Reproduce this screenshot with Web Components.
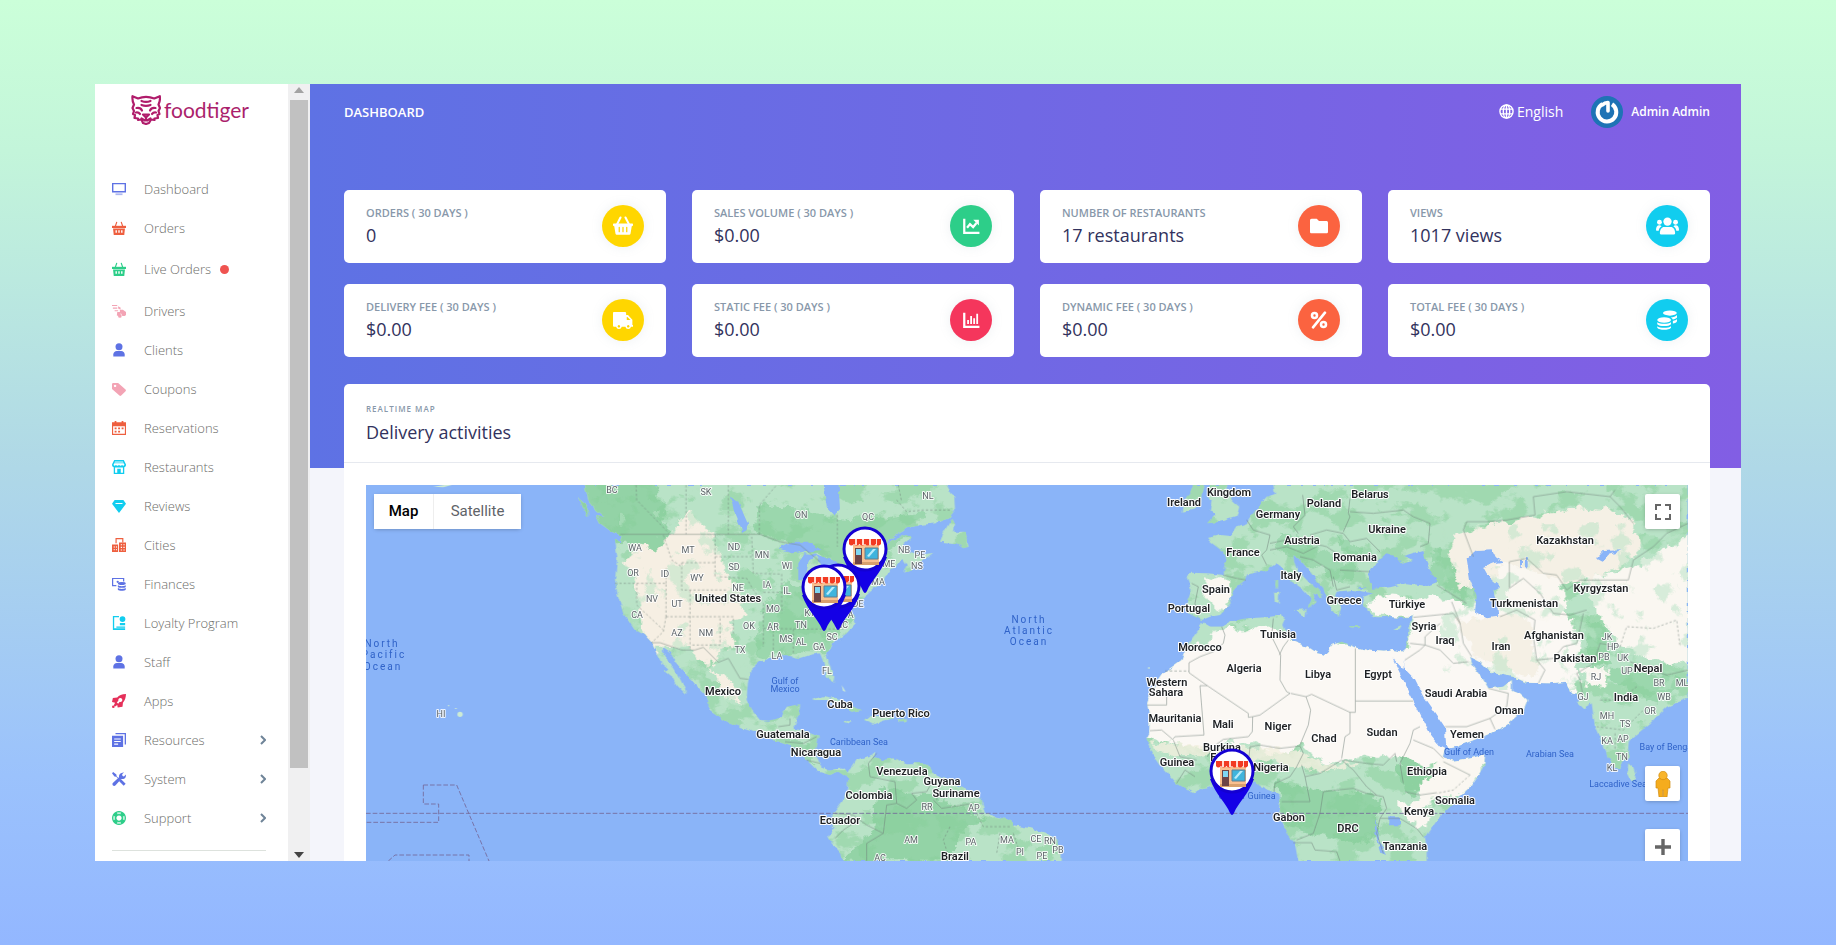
<!DOCTYPE html>
<html lang="en">
<head>
<meta charset="utf-8">
<meta name="viewport" content="width=device-width, initial-scale=1">
<title>FoodTiger – Dashboard</title>
<style>
  html, body { margin: 0; height: 100%; }
  body {
    font-family: "Open Sans", "Noto Sans", sans-serif;
    background: linear-gradient(180deg, #cbffd9 0%, #c3f5da 16%, #b0d9e6 48%, #9bc2fc 82%, #93b7ff 100%);
  }
</style>
</head>
<body>
<ft-window>
  <ft-sidebar slot="side">
    <ft-nav-item icon="tv" tone="#5e72e4">Dashboard</ft-nav-item>
    <ft-nav-item icon="basket" tone="#ee5f3f">Orders</ft-nav-item>
    <ft-nav-item icon="basket" tone="#2dce89" live>Live Orders</ft-nav-item>
    <ft-nav-item icon="delivery" tone="#f3a4b5">Drivers</ft-nav-item>
    <ft-nav-item icon="user" tone="#5e72e4">Clients</ft-nav-item>
    <ft-nav-item icon="tag" tone="#f3a4b5">Coupons</ft-nav-item>
    <ft-nav-item icon="calendar" tone="#ee5f3f">Reservations</ft-nav-item>
    <ft-nav-item icon="shop" tone="#11cdef">Restaurants</ft-nav-item>
    <ft-nav-item icon="diamond" tone="#11cdef">Reviews</ft-nav-item>
    <ft-nav-item icon="city" tone="#ee5f3f">Cities</ft-nav-item>
    <ft-nav-item icon="money" tone="#5e72e4">Finances</ft-nav-item>
    <ft-nav-item icon="badge" tone="#11cdef">Loyalty Program</ft-nav-item>
    <ft-nav-item icon="user" tone="#5e72e4">Staff</ft-nav-item>
    <ft-nav-item icon="rocket" tone="#e5305a">Apps</ft-nav-item>
    <ft-nav-item icon="copy" tone="#5e72e4" more>Resources</ft-nav-item>
    <ft-nav-item icon="tools" tone="#5e72e4" more>System</ft-nav-item>
    <ft-nav-item icon="support" tone="#2dce89" more>Support</ft-nav-item>
  </ft-sidebar>
  <ft-topbar slot="main" heading="Dashboard"></ft-topbar>
  <ft-stats slot="main">
    <ft-stat icon="basketBig" tone="#ffd600" value="0">Orders ( 30 days )</ft-stat>
    <ft-stat icon="chartLine" tone="#2dce89" value="$0.00">Sales Volume ( 30 days )</ft-stat>
    <ft-stat icon="folder" tone="#fb6340" value="17 restaurants">Number of restaurants</ft-stat>
    <ft-stat icon="users" tone="#11cdef" value="1017 views">Views</ft-stat>
    <ft-stat icon="truck" tone="#ffd600" value="$0.00">Delivery fee ( 30 days )</ft-stat>
    <ft-stat icon="chartBar" tone="#f5365c" value="$0.00">Static fee ( 30 days )</ft-stat>
    <ft-stat icon="percent" tone="#fb6340" value="$0.00">Dynamic fee ( 30 days )</ft-stat>
    <ft-stat icon="coins" tone="#11cdef" value="$0.00">Total fee ( 30 days )</ft-stat>
  </ft-stats>
  <ft-panel slot="main" overline="Realtime map" heading="Delivery activities">
    <ft-map></ft-map>
  </ft-panel>
</ft-window>

<script>
const define = (name, html, after) => {
  const tpl = document.createElement('template');
  tpl.innerHTML = html;
  customElements.define(name, class extends HTMLElement {
    constructor() {
      super();
      this.attachShadow({ mode: 'open' }).append(tpl.content.cloneNode(true));
    }
    connectedCallback() { if (after) after(this, this.shadowRoot); }
  });
};

/* 16 × 16 glyphs, painted in currentColor */
const ICONS = {
  tv: '<path d="M0 1h16v11H0zM1.6 2.6v7.8h12.8V2.6z" fill-rule="evenodd"/><path d="M4 13h8v2H4z" opacity=".5"/>',
  basket: '<path d="M0 5.5h16V8H0z"/><path d="M5.5 1 3.8 6M10.5 1l1.700 5" stroke="currentColor" stroke-width="1.300"/><path fill-rule="evenodd" d="M1.2 8.6h13.6l-.8 7.4H2zM4 10.5v3h1.6v-3zm3.2 0v3h1.6v-3zm3.2 0v3H12v-3z"/>',
  delivery: '<path d="M0 1h6v1.4H0zM1 4h5v1.4H1zM3 7h4v1.4H3zM7 2.5l3 1.8-.5 2L7 5zM6 9h3V6.5l3.5.2L16 9v3.5l-2.2 1.2H12l-1.8-3-2.2 3L5.5 13z"/><circle cx="9" cy="13.6" r="2.1"/><circle cx="13.6" cy="11.5" r="2.1"/>',
  user: '<circle cx="8" cy="4.2" r="4"/><path d="M1.5 15.5V13c0-2.4 2-4 4-4h5c2 0 4 1.600 4 4v2.500z"/>',
  tag: '<path fill-rule="evenodd" d="M0 2.500A1.500 1.500 0 0 1 1.500 1H7l8.500 7.500c.6.600.6 1.400 0 2l-5 5c-.6.600-1.400.600-2 0L0 8zM3.500 3a1.400 1.400 0 1 0 .01 0z"/>',
  calendar: '<path fill-rule="evenodd" d="M0 1.500h16V16H0zM1.300 6v8.600h13.400V6z"/><path d="M3 0h2v3H3zM11 0h2v3h-2zM3 7.500h2.200v2H3zM7 7.500h2.200v2H7zM11 7.500h2.200v2H11zM3 11h2.200v2H3zM7 11h2.200v2H7z"/>',
  shop: '<path fill-rule="evenodd" d="M2.500 0h11L16 5c0 2-1 3-2 3.200V16H2V8.200C1 8 0 7 0 5zM3.500 1.600 1.800 5.500c.4 1.300 2 1.300 2.700 0 .6 1.300 2.800 1.300 3.500 0 .7 1.300 2.900 1.300 3.500 0 .7 1.300 2.300 1.300 2.700 0l-1.700-3.900zM3.500 8.500v6H6V10h4v4.500h2.500v-6z"/><path d="M2.500 2h11l.8 2H1.700z" opacity=".5"/>',
  diamond: '<path fill-rule="evenodd" d="M3 1h10l3 4.500L8 16 0 5.500zM4.500 4.500l-1 1.300h9l-1-1.300z"/>',
  city: '<path d="M4 0h9v5h-1.300V1.300H5.300V6H4z"/><path fill-rule="evenodd" d="M0 7.500h7V16H0zM2 9.500V11h1V9.500zm2.500 0V11h1V9.500zM2 12.500V14h1v-1.500zm2.500 0V14h1v-1.500zM8 5h8v11H8zm2 2v1.400h1.500V7zm3 0v1.400h1.500V7zm-3 3v1.400h1.500V10zm3 0v1.400h1.500V10zm-3 3v1.400h1.500V13zm3 0v1.400h1.500V13z"/>',
  money: '<path d="M0 1h14v4h-1.400V2.400H1.400v6.800H5v1.400H0z"/><circle cx="6.500" cy="5.500" r="1.300"/><ellipse cx="11.200" cy="7.500" rx="4.500" ry="1.700"/><path d="M6.700 9.500c1.500 1.300 7.500 1.300 9 0v1.800c-1.500 1.500-7.500 1.500-9 0zM6.700 12.700c1.500 1.300 7.500 1.300 9 0v1.800c-1.500 1.500-7.500 1.500-9 0z"/>',
  badge: '<path d="M1 0h7v1.500H2.500V14H15v2H1z"/><circle cx="12" cy="3.500" r="3.300"/><path d="M9 8h6v2.500H9zM5 12h10v1.500H5z"/>',
  rocket: '<path fill-rule="evenodd" d="M16 0c-5 .3-8 1.500-10 4L1 4.500 0 9l3.500 1L2 13l1.500 1.200L6 12.500l.5 3 5.500-1 .5-4.500c2.500-3 3.300-6 3.500-10zM9.500 4.500a2.300 2.300 0 1 0 .01 0z"/><path d="M5.500 9.500 10 5.500v2L7 11z" fill="#fff"/><circle cx="1.500" cy="14.500" r="1.500"/>',
  copy: '<path d="M4 0h12v13h-1.500V1.500H4z"/><path fill-rule="evenodd" d="M0 3h12.700v13H0zM2.500 6.300v1.200H10V6.300zm0 2.900v1.200H10V9.200zm0 2.900v1.200h4.500v-1.200z"/>',
  tools: '<path d="M1.300 0 5 2.800l.3 2L9 8.500l1.400-.3 5.200 5.200-2.200 2.300-5.200-5.200.3-1.400-3.700-3.700-2-.3L0 1.300z"/><path d="m11 1.200 2.800-.8L11.600 2.700l.4 1.800 1.700.5 2.100-2.200c.6 2.400-.6 4.900-3 5.200L10.500 8l-6.400 7.200c-1 1-2.300.8-3 .1-.8-.9-.8-2.200.1-3L8 6c-.3-2.300.9-4.300 3-4.800z"/>',
  support: '<path fill-rule="evenodd" d="M8 0a8 8 0 1 1-.01 0zM8 5a3 3 0 1 0 .01 0z"/><path d="M5.500 1.800a7 7 0 0 1 5 0l-.8 1.800a5 5 0 0 0-3.400 0zM5.500 14.200a7 7 0 0 0 5 0l-.8-1.800a5 5 0 0 1-3.400 0zM1.800 5.500a7 7 0 0 0 0 5l1.800-.8a5 5 0 0 1 0-3.400zM14.200 5.500a7 7 0 0 1 0 5l-1.800-.8a5 5 0 0 0 0-3.400z" fill="#fff" opacity=".7"/>',
  basketBig: '<path d="M.5 6h15c.7 0 .7 2 0 2l-.5.200-1 6c-.1.500-.5.800-1 .800H3c-.5 0-.9-.3-1-.8l-1-6L.5 8c-.7 0-.7-2 0-2z"/><path d="M6 1.200 3.300 6.500M10 1.200l2.700 5.300" stroke="currentColor" stroke-width="1.700" stroke-linecap="round"/><path d="M5 9v3.500M8 9v3.500M11 9v3.500" stroke="var(--tone)" stroke-width="1" stroke-linecap="round"/>',
  chartLine: '<path d="M1 1.500h2v11.500h12.500v2H1z"/><path d="m4.500 9.500 2.600-3.200 2.800 2.600 3-3.600" fill="none" stroke="currentColor" stroke-width="2"/><path d="M10 2.500h5v5z"/>',
  folder: '<path d="M0 3c0-.8.500-1.500 1.500-1.500H6L8 3.500h6.500c.9 0 1.500.600 1.500 1.500v8c0 .9-.6 1.500-1.500 1.500h-13C.5 14.500 0 13.900 0 13z"/>',
  users: '<circle cx="8" cy="4.600" r="2.900"/><circle cx="2.400" cy="5" r="1.700"/><circle cx="13.600" cy="5" r="1.700"/><path d="M3.500 13.500c-.8 0-.8-.4-.8-1 0-2.400 1.300-4.200 3-4.200h4.600c1.700 0 3 1.800 3 4.200 0 .6 0 1-.8 1zM0 10.500c0-2 .8-3.300 2.200-3.300.8 0 1.300.2 1.700.6-1.300.8-1.900 1.900-2 3.100H.5c-.4 0-.5-.1-.5-.4zM16 10.500c0-2-.8-3.300-2.200-3.300-.8 0-1.300.2-1.700.6 1.300.8 1.900 1.900 2 3.100h1.400c.4 0 .5-.1.500-.4z"/>',
  truck: '<path fill-rule="evenodd" d="M1 1.500h8.500c.5 0 1 .4 1 1V4H12l3.500 3.700V12h.5v1.300h-1.600a2.300 2.300 0 0 1-4.500 0H7a2.300 2.300 0 0 1-4.500 0H1c-.6 0-1-.4-1-1v-10c0-.5.4-.8 1-.8zm10 4V8h3l-2.500-2.500zM4.700 12a1 1 0 1 0 .01 0zm7.500 0a1 1 0 1 0 .01 0z"/>',
  chartBar: '<path d="M1 1.500h2v11.500h12.500v2H1zM4.600 8h1.600v3.500H4.600zM7.300 4.500h1.600v7H7.300zM10 6.500h1.600v5H10zM12.700 2.500h1.600v9h-1.600z"/>',
  percent: '<g fill="none" stroke="currentColor" stroke-width="2.300"><circle cx="4" cy="4" r="2.200"/><circle cx="12" cy="12" r="2.200"/><path d="M13.300 1.500 2.700 14.500" stroke-linecap="round"/></g>',
  coins: '<ellipse cx="10.300" cy="2.400" rx="5.500" ry="2.100"/><path d="M16 4c-1 1.200-3 1.800-5 1.900 1 .4 1.500 1 1.600 1.700 1.500-.3 2.800-.8 3.400-1.600zM16 7.200c-.6.8-1.900 1.300-3.300 1.500v2c1.500-.3 3.300-.9 3.300-2z"/><ellipse cx="5.700" cy="8" rx="5.500" ry="2.200"/><path d="M.2 9.800c2.200 1.700 8.800 1.700 11 0v1.500c-1.600 2-9.400 2-11 0zM.2 12.900c2.200 1.700 8.800 1.700 11 0v1.200c-1.600 2.200-9.400 2.200-11 0z"/>',
  globe: '<g fill="none" stroke="currentColor" stroke-width="1.500"><circle cx="8" cy="8" r="7"/><ellipse cx="8" cy="8" rx="3.400" ry="7"/><path d="M8 1v14M1.500 5.500h13M1.500 10.500h13"/></g>'
};
const glyph = name => `<svg viewBox="0 0 16 16" fill="currentColor" aria-hidden="true">${ICONS[name]}</svg>`;

define('ft-window', `
  <style>
    :host { display: flex; box-sizing: border-box; height: 100vh; padding: 84px 95px; }
    aside { display: flex; flex: 0 0 215px; background: #fff; overflow: hidden; }
    ::slotted([slot=side]) { flex: 1; }
    main {
      flex: 1; min-width: 0; display: flex; flex-direction: column; overflow: hidden;
      padding: 0 31px 0 34px;
      background: linear-gradient(90deg, #5e72e4, #825ee4) top / 100% 384px no-repeat, #f4f5fb;
    }
  </style>
  <aside><slot name="side"></slot><ft-scrollbar></ft-scrollbar></aside>
  <main><slot name="main"></slot></main>`);

define('ft-scrollbar', `
  <style>
    :host { display: flex; flex-direction: column; flex: 0 0 22px; background: #f0f0f1; }
    div { width: 18px; height: 100%; margin: 0 auto 0 2px; display: flex; flex-direction: column; align-items: center; }
    i { flex: 1; width: 18px; margin-bottom: 84px; background: #c1c1c1; }
    svg { width: 10px; height: 6px; margin: 3px 0 7px; }
    svg + i + svg { margin: 0 0 3px; }
  </style>
  <div>
    <svg viewBox="0 0 10 6"><path d="M0 6 5 0l5 6z" fill="#a3a3a3"/></svg>
    <i></i>
    <svg viewBox="0 0 10 6"><path d="M0 0h10L5 6z" fill="#444"/></svg>
  </div>`);

define('ft-sidebar', `
  <style>
    :host { display: block; }
    .brand { display: flex; align-items: center; gap: 3px; height: 30px; margin: 11px 0 44px 36px; color: #ab1f6c; text-decoration: none; font: 400 21px/30px Lato, sans-serif; }
    .brand svg { width: 30px; height: 30px; }
    nav { display: flex; flex-direction: column; }
    hr { border: 0; border-top: 1px solid #dde2dd; margin: 13px 22px 0 17px; }
  </style>
  <a class="brand" href="#home" aria-label="foodtiger">
    <svg viewBox="0 0 30 30" fill="none" stroke="#b01c6b" stroke-width="2.200" stroke-linejoin="round" stroke-linecap="round">
      <path d="M7 3.500 1.500 1.200C1.200 4 1.600 7 3 9.500L1.500 13l1.500 3-1 3 2 1-.5 3 3.500.5V25l3.500-.5L12 28l3 1 3-1 2-3.500 3.500.5v-1.500l3.500-.5-.5-3 2-1-1-3 1.500-3L27.500 9.500c1.300-2.500 1.700-5.500 1.300-8.300L23.300 3.500C18 1.500 12 1.500 7 3.500z"/>
      <path d="M10.500 6c3 1.300 6 1.300 9 0M10.500 10c3 1.200 6 1.200 9 0M5.500 13c2.500-.5 4.500.3 5.500 2.500M24.500 13c-2.500-.5-4.500.3-5.500 2.500M5 17.500c1.500-.3 3 .2 4 1.500M25 17.500c-1.500-.3-3 .2-4 1.500M12 19.500h6l-3 3zM15 22.500v2M10.500 23.500l3.500 2M19.500 23.500l-3.500 2"/>
    </svg>
    <span>foodtiger</span>
  </a>
  <nav aria-label="Main"><slot></slot></nav>
  <hr>`);

define('ft-nav-item', `
  <style>
    :host { display: block; }
    a { display: flex; align-items: center; height: 39px; padding: 0 22px 0 17px; color: #6c6c69; font-size: 13px; font-weight: 300; text-decoration: none; }
    :host([live]) a { height: 44px; }
    .icon { display: flex; flex: 0 0 32px; color: var(--tone); }
    .icon svg { width: 14px; height: 14px; overflow: visible; }
    .dot { display: none; width: 9px; height: 9px; margin-left: 9px; border-radius: 50%; background: #ef5350; }
    :host([live]) .dot { display: block; }
    .chev { display: none; width: 6px; height: 10px; margin-left: auto; fill: none; stroke: #6f8498; stroke-width: 2; }
    :host([more]) .chev { display: block; }
  </style>
  <a href="#"><span class="icon"></span><span><slot></slot></span><span class="dot"></span>
    <svg class="chev" viewBox="0 0 6 10"><path d="m1 1 4 4-4 4"/></svg></a>`,
  (el, root) => {
    el.style.setProperty('--tone', el.getAttribute('tone'));
    root.querySelector('.icon').innerHTML = glyph(el.getAttribute('icon'));
  });

define('ft-topbar', `
  <style>
    :host { display: flex; align-items: center; flex: none; height: 55px; margin-bottom: 51px; color: #fff; }
    h1 { margin: 0 auto 0 0; font-size: 13px; line-height: 20px; font-weight: 600; text-transform: uppercase; }
    button { display: flex; align-items: center; border: 0; padding: 0; background: none; color: inherit; font: 400 14px/20px "Open Sans", sans-serif; }
    .lang { gap: 3px; margin-right: 28px; }
    .lang svg { width: 15px; height: 15px; }
    .me { gap: 8px; font-size: 12px; font-weight: 600; }
    .me svg { width: 32px; height: 32px; }
  </style>
  <h1></h1>
  <button class="lang" type="button">${glyph('globe')}<span>English</span></button>
  <button class="me" type="button">
    <svg viewBox="0 0 32 32"><circle cx="16" cy="16" r="16" fill="#1e73b5"/><path d="M11.500 8a9.300 9.300 0 1 0 9.500 .3" fill="none" stroke="#fff" stroke-width="4"/><path d="M12 8.500Q13.500 6.700 17 6.500v8.500" fill="none" stroke="#fff" stroke-width="3.600" stroke-linejoin="round" stroke-linecap="round"/></svg>
    <span>Admin Admin</span>
  </button>`,
  (el, root) => { root.querySelector('h1').textContent = el.getAttribute('heading'); });

define('ft-stats', `
  <style>:host { display: grid; flex: none; grid-template-columns: repeat(4, 1fr); gap: 21px 26px; margin-bottom: 27px; }</style>
  <slot></slot>`);

define('ft-stat', `
  <style>
    :host { display: flex; align-items: flex-start; justify-content: space-between; box-sizing: border-box; height: 73px; padding: 15px 22px; border-radius: 5px; background: #fff; }
    h2, p { margin: 0; white-space: nowrap; }
    h2 { color: #8898aa; font-size: 11px; line-height: 16px; font-weight: 600; text-transform: uppercase; }
    p { margin-top: 2px; color: #32325d; font-size: 18px; line-height: 24px; font-weight: 500; }
    .icon { display: grid; place-items: center; flex: none; width: 42px; height: 42px; border-radius: 50%; background: var(--tone); color: #fff; box-shadow: 0 0 12px rgba(136, 152, 170, .15); }
    .icon svg { width: 20px; height: 20px; }
    :host([icon=chartLine]) svg, :host([icon=chartBar]) svg, :host([icon=folder]) svg, :host([icon=percent]) svg { width: 18px; height: 18px; }
    :host([icon=users]) svg { width: 23px; height: 23px; }
  </style>
  <div><h2><slot></slot></h2><p></p></div><span class="icon"></span>`,
  (el, root) => {
    el.style.setProperty('--tone', el.getAttribute('tone'));
    root.querySelector('p').textContent = el.getAttribute('value');
    root.querySelector('.icon').innerHTML = glyph(el.getAttribute('icon'));
  });

define('ft-panel', `
  <style>
    :host { display: flex; flex: 1; min-height: 0; flex-direction: column; border-radius: 5px 5px 0 0; background: #fff; }
    header { padding: 18px 22px 17px; border-bottom: 1px solid #e6e9ef; }
    h6 { margin: 0 0 3px; color: #8898aa; font-size: 8px; line-height: 14px; font-weight: 600; letter-spacing: 1px; text-transform: uppercase; }
    h3 { margin: 0; color: #32325d; font-size: 18px; line-height: 26px; font-weight: 500; }
    ::slotted(*) { flex: 1; min-height: 0; margin: 22px 22px 0; }
  </style>
  <header><h6></h6><h3></h3></header><slot></slot>`,
  (el, root) => {
    root.querySelector('h6').textContent = el.getAttribute('overline');
    root.querySelector('h3').textContent = el.getAttribute('heading');
  });

/* Map labels: text, centre x, centre y */
const COUNTRIES = [['United States',728,598],['Mexico',723,691],['Guatemala',783,734],['Nicaragua',816,752],['Cuba',840,704],['Puerto Rico',901,713],['Venezuela',902,771],['Guyana',942,781],['Suriname',956,793],['Colombia',869,795],['Ecuador',840,820],['Brazil',955,856],
['Ireland',1184,502],['Kingdom',1229,492],['Belarus',1370,494],['Poland',1324,503],['Germany',1278,514],['Ukraine',1387,529],['Austria',1302,540],['France',1243,552],['Romania',1355,557],['Italy',1291,575],['Spain',1216,589],['Greece',1344,600],['Türkiye',1407,604],['Portugal',1189,608],['Syria',1424,626],['Tunisia',1278,634],['Morocco',1200,647],['Iraq',1445,640],['Algeria',1244,668],['Libya',1318,674],['Egypt',1378,674],['Western',1167,682],['Sahara',1166,692],['Saudi Arabia',1456,693],['Mauritania',1175,718],['Mali',1223,724],['Niger',1278,726],['Chad',1324,738],['Sudan',1382,732],['Burkina',1222,747],['Faso',1222,757],['Guinea',1177,762],['Nigeria',1271,767],['Ethiopia',1427,771],['Gabon',1289,817],['DRC',1348,828],['Kenya',1419,811],['Tanzania',1405,846],['Somalia',1455,800],['Yemen',1467,734],['Oman',1509,710],['Iran',1501,646],['Turkmenistan',1524,603],['Kazakhstan',1565,540],['Kyrgyzstan',1601,588],['Afghanistan',1554,635],['Pakistan',1575,658],['Nepal',1648,668],['India',1626,697]];
const STATES = [['BC',612,489],['SK',706,491],['ON',801,514],['QC',868,516],['WA',635,547],['MT',688,549],['ND',734,546],['MN',762,554],['WI',787,565],['OR',633,572],['ID',665,573],['WY',697,577],['SD',734,566],['NE',738,587],['IA',767,584],['IL',787,590],['NV',652,598],['UT',677,603],['MO',773,608],['CA',637,614],['AZ',677,632],['NM',706,632],['OK',749,625],['AR',773,626],['TN',801,624],['MS',786,638],['AL',801,641],['GA',819,646],['SC',832,636],['TX',740,649],['LA',777,655],['FL',827,670],['NB',904,549],['PE',920,554],['NS',917,565],['ME',889,563],['MA',878,581],['DE',858,603],['NL',928,495],['KY',810,612],['VA',848,614],['NC',842,624],['HI',441,713],['RR',927,806],['AP',974,807],['AM',911,839],['PA',971,841],['MA',1007,839],['CE',1036,838],['RN',1050,840],['PI',1020,851],['PB',1058,849],['PE',1042,855],['AC',880,857],
['JK',1607,636],['HP',1613,646],['PB',1604,656],['UK',1623,657],['UP',1627,670],['BR',1659,682],['ML',1682,682],['RJ',1596,676],['GJ',1583,696],['WB',1664,696],['OR',1650,710],['MH',1607,715],['TS',1625,723],['KA',1607,740],['AP',1623,738],['TN',1622,756],['KL',1612,767]];
const SEAS = [['Gulf of',785,680],['Mexico',785,688],['Caribbean Sea',859,741],['Gulf of Guinea',1247,795],['Gulf of Aden',1469,751],['Arabian Sea',1550,753],['Bay of Bengal',1667,746],['Laccadive Sea',1618,783]];
const OCEANS = [['North',382,643],['Pacific',384,654],['Ocean',383,666],['North',1029,619],['Atlantic',1029,630],['Ocean',1029,641]];
const PINS = [[865,549],[838,586],[824,587],[1232,771]];

const labels = (list, cls) => list.map(([t, x, y]) => `<text class="${cls}" x="${x}" y="${y + 4}">${t}</text>`).join('');
const pins = PINS.map(([x, y]) => `<g transform="translate(${x} ${y})">
  <path d="M-22 8C-16 24-6 32-2 42q2 4 4 0C6 32 16 24 22 8z" fill="#1400e6"/>
  <circle r="21" fill="#fff" stroke="#1400d2" stroke-width="3"/>
  <path d="M-12-4h26v20h-26z" fill="#f9bf8f"/><path d="M-12 13h26v3h-26z" fill="#d9a06c"/>
  <path d="M-10-1h7v16h-7z" fill="#6d4346"/><path d="M-9 0h5v6h-5z" fill="#7fd6f2"/>
  <path d="M0-1h13v11H0z" fill="#3fb4dd" stroke="#5f7f93"/><path d="m2 7 6-7h3l-7 8z" fill="#b8ecfb"/>
  <path d="M-16-10h32v5q-3 3-5 0-3 3-5.500 0-3 3-5.500 0-3 3-5.500 0-3 3-5.500 0-3 3-5 0z" fill="#f23a22"/>
  <path d="M-10-10h2v6h-2zM-3-10h2v6h-2zM4-10h2v6H4zM11-10h1v6h-1z" fill="#ffd9cf"/></g>`).join('');

/* Continents, on a grid three times finer than the labels' one */
const AMERICA = `M675 15 L685 60 710 90 735 110 708 105 720 130 755 155 785 168 780 188 765 178 772 230 765 300 772 340 790 400 825 450 855 465 875 487 890 520 905 550 925 565 915 575 940 595 950 615 980 645 975 625 950 580 925 540 905 510 910 502 930 515 950 550 980 585 1010 620 1040 650 1050 675 1045 690 1090 720 1140 740 1190 755 1240 780 1310 805 1340 840 1375 875 1410 885 1435 875 1465 895 1462 925 1455 955 1420 1000 1410 1030 1425 1045 1405 1065 1415 1090 1440 1120 1455 1143 H2105 L2105 1110 2090 1080 2060 1060 2010 1045 1960 1035 1950 1020 1910 1010 1875 1000 1865 960 1840 940 1800 920 1760 900 1720 880 1700 850 1640 850 1600 835 1570 840 1540 830 1550 815 1520 830 1490 840 1465 878 1445 862 1410 872 1385 862 1370 830 1368 810 1372 790 1376 770 1340 755 1300 742 1310 720 1318 700 1320 673 1280 680 1265 710 1230 722 1200 720 1175 690 1160 660 1163 610 1172 570 1200 545 1230 535 1280 525 1320 535 1350 525 1380 520 1390 545 1400 590 1420 612 1423 590 1407 550 1398 520 1420 490 1460 460 1487 430 1480 410 1465 390 1490 365 1510 350 1540 325 1570 310 1575 290 1590 275 1610 250 1630 240 1640 255 1630 278 1650 270 1690 240 1720 218 1680 225 1650 215 1630 195 1655 175 1635 165 1600 180 1570 200 1590 180 1640 145 1680 135 1730 130 1765 115 1785 90 1783 55 1760 15z
 M1740 185 L1750 160 1775 115 1785 130 1782 155 1815 155 1826 200 1810 205 1790 190z M1355 660 L1390 648 1430 655 1480 680 1505 690 1475 695 1450 680 1410 660z M1512 720 L1530 705 1580 706 1600 715 1570 722 1545 732z M1615 718h25v6h-25z M1450 722l24 2-4 6-18-3z M655 55l25 20 5 35-20-30z`;
const OLDWORLD = `M2525 425 L2550 440 2585 440 2610 425 2660 415 2720 412 2765 405 2775 420 2770 435 2780 460 2800 485 2840 500 2870 520 2900 525 2915 495 2945 485 2980 500 3030 512 3070 515 3100 510 3130 515 3140 495 3145 470 3150 430 3160 405 3130 415 3090 410 3050 412 3020 395 3012 370 3010 350 3040 340 2980 330 2930 335 2920 360 2945 380 2935 410 2920 395 2902 368 2890 320 2870 300 2850 275 2822 240 2800 225 2802 245 2812 270 2840 300 2880 335 2885 352 2860 340 2866 370 2846 385 2855 358 2825 325 2790 300 2770 265 2750 250 2720 270 2700 275 2662 283 2655 300 2630 320 2610 350 2615 370 2580 405 2550 410 2525 420 2485 400 2480 370 2495 330 2480 292 2495 278 2540 280 2590 285 2600 240 2590 215 2550 185 2545 173 2580 165 2610 168 2628 140 2660 130 2680 100 2700 72 2720 50 2745 42 2740 15 H3984 V655 L3920 680 3870 730 3810 780 3805 830 3785 850 3780 870 3760 860 3730 800 3705 740 3695 670 3670 685 3650 665 3670 650 3635 640 3615 605 3570 610 3500 608 3460 590 3430 585 3390 575 3360 545 3330 530 3340 560 3370 600 3385 625 3430 620 3455 600 3455 630 3480 640 3502 660 3490 690 3440 735 3380 765 3290 800 3252 808 3245 830 3280 842 3330 835 3375 822 3372 860 3330 920 3280 970 3230 1020 3195 1070 3200 1110 V1143 H2815 L2805 1090 2780 1060 2755 1000 2760 970 2755 940 2720 930 2680 905 2630 915 2550 920 2500 940 2450 910 2405 860 2370 810 2360 775 2368 760 2370 720 2362 670 2375 630 2410 580 2465 540 2485 490 2515 450z
 M2465 95 L2470 60 2495 30 2500 15 H2532 L2525 40 2520 80z M2545 130 L2570 100 2550 90 2555 60 2542 40 2550 15 H2600 L2615 60 2638 80 2630 110 2580 125z M2805 390l35-2-4 24z M2742 335l16 0 -2 33-12-3z M2748 300l6 0 0 24-8-6z M2968 438l32 1-2 5-28-2z M3100 446l26-12-8 14z M3805 850 L3820 865 3830 895 3815 905 3802 880z`;

const MAP_LAND = `
<defs>
  <clipPath id="land"><path d="${AMERICA} ${OLDWORLD}"/></clipPath>
  <filter id="woods" x="0" y="0" width="1" height="1" color-interpolation-filters="sRGB">
    <feTurbulence type="fractalNoise" baseFrequency=".012 .015" numOctaves="5" seed="8"/>
    <feColorMatrix values="0 0 0 0 .53  0 0 0 0 .81  0 0 0 0 .6  14 0 0 0 -7.300"/>
  </filter>
  <filter id="sand" x="0" y="0" width="1" height="1" color-interpolation-filters="sRGB">
    <feTurbulence type="fractalNoise" baseFrequency=".014" numOctaves="5" seed="21"/>
    <feColorMatrix values="0 0 0 0 .73  0 0 0 0 .89  0 0 0 0 .78  14 0 0 0 -8"/>
  </filter>
  <filter id="rough" x="-5%" y="-5%" width="110%" height="110%">
    <feTurbulence type="fractalNoise" baseFrequency=".03" numOctaves="3" seed="3"/>
    <feDisplacementMap in="SourceGraphic" scale="46" xChannelSelector="R" yChannelSelector="G"/>
  </filter>
  <filter id="coast" x="-2%" y="-2%" width="104%" height="104%">
    <feTurbulence type="fractalNoise" baseFrequency=".05" numOctaves="2" seed="5"/>
    <feDisplacementMap in="SourceGraphic" scale="14" xChannelSelector="R" yChannelSelector="G"/>
  </filter>
</defs>
<rect x="18" y="15" width="3966" height="1600" fill="#8ab4f8"/>
<g filter="url(#coast)"><g clip-path="url(#land)">
  <rect x="18" y="0" width="3966" height="1143" fill="#b9e3c7"/>
  <g filter="url(#rough)" fill="#93d3a6">
    <path d="M640 0h250l30 160 50 60-30 90-60-40-60-80-80 10 50 260-60-40-40-260z"/>
    <path d="M1190 75 1420 110 1560 120 1700 100 1640 170 1540 250 1430 250 1300 190 1190 160zM1270 310 1420 330 1480 400 1400 520 1300 520 1190 530 1200 400z" opacity=".8"/>
    <path d="M1560 920 1700 950 1880 1010 1800 1060 1780 1143 1440 1143 1530 1060z"/>
    <path d="M2750 900 2900 930 3060 950 3050 1060 2990 1090 2850 1060 2770 1030zM3130 800l70 20 20 90-70 30-40-60z"/>
    <path d="M3220 200l100 60 50 110-70-20-90-50zM3680 400l60 60 20 90-80 10zM3700 560l200 20 84 30-100 60-120-60z" opacity=".8"/>
    <path d="M2760 150l80 40 160 80-50 40-90-50-120-60zM2920 160l90 60-40 20zM1200 770l150 10 10 80-90-70z" opacity=".7"/>
  </g>
  <rect x="18" y="0" width="3966" height="1143" filter="url(#woods)" opacity=".5"/>
  <g filter="url(#rough)">
    <path d="M830 190 890 220 920 180 990 95 1040 150 1065 165 1080 250 1130 310 1160 400 1110 420 1120 480 1050 560 1110 600 1140 670 1100 660 1050 560 980 500 880 500 930 620 850 470 830 330 800 250z" fill="#f6efe3"/>
    <path d="M2340 560 2500 500 2580 450 2720 440 2800 480 3140 500 3150 410 3060 410 3020 380 3060 340 3300 360 3400 400 3620 400 3660 480 3650 640 3640 660 3200 860 3110 830 3010 830 2900 850 2830 800 2740 830 2690 790 2600 790 2540 810 2440 790 2340 770z" fill="#fbf8f4"/>
    <path d="M3290 160 3400 130 3520 110 3640 80 3760 90 3820 130 3840 200 3780 260 3690 300 3610 310 3480 300 3300 330 3270 220zM3290 420 3500 400 3540 590 3430 580 3340 520z" fill="#f5f0e5"/>
    <path d="M3680 300 3820 260 4020 150V560L3860 540 3780 500 3700 380zM3420 240 3600 300 3620 420 3400 400zM3250 820 3400 800 3330 930 3150 990 3180 930zM3660 560l90 10-20 60-60-20zM3120 970l80 10 0 60-60-10zM2540 290l60 10 20 60-40 40-40-40z" fill="#faf7f1"/>
    <path d="M2380 790 2580 800 2700 800 2820 820 2900 850 3000 850 2900 875 2760 850 2600 830 2400 820z" fill="#f3efdf" opacity=".8"/>
    <path d="M2500 430l120-5 160-15-10 20-150 10-70 20-20 50z" fill="#b9e3c7"/>
  </g>
  <g opacity=".55">
    <svg x="780" y="90" width="420" height="600"><rect width="420" height="600" filter="url(#sand)"/></svg>
    <svg x="3240" y="130" width="744" height="500"><rect width="744" height="500" filter="url(#sand)"/></svg>
  </g>
</g>
<g fill="#8ab4f8">
  <path d="M1388 0 1400 80 1425 107 1440 90 1435 0zM1110 50l25 15 30 70-15 25-25-60zM1255 205l40-20 50 0 40 25-50 5-40 5zM1315 300l0-50 20-30 40 5-30 20-10 55zM1370 225l60 20 20 40-30 10-30-30zM1420 310l50-10-10 12-40 10z"/>
  <path d="M3030 310 3025 285 3050 245 3080 220 3110 230 3125 250 3160 240 3130 228 3190 210 3195 235 3220 290 3235 305 3200 318 3140 310 3090 322 3040 326z"/>
  <path d="M3320 235 3350 210 3395 208 3405 230 3430 245 3400 250 3370 262 3380 280 3395 300 3420 320 3400 330 3412 380 3415 410 3380 415 3345 395 3350 350 3330 300z"/>
  <path d="M3098 535 3130 568 3138 530 3132 562 3160 590 3190 650 3225 700 3255 745 3258 790 3270 815 3240 800 3215 770 3190 720 3160 660 3130 600zM3708 235l20-22 60-2-40 14-20 20zM3480 240h6v20h-6zM3495 232h8v30h-8zM3088 1012h32v24h-32zM2990 320l30 2-20 8z"/>
  <path d="M3050 1015l8 70 20 40-14-6-18-60z"/>
</g></g>
<g fill="#cdebd4"><circle cx="300" cy="703" r="8"/><path d="M264 675h4v4h-4zM285 684h5v3h-5zM1445 615l12 20-8-2zM2364 562h6v4h-6zM220 20l90-14-60 16z"/></g>
<g fill="none" stroke="#6f7f78" stroke-width="2" opacity=".75" stroke-linejoin="round">
  <g transform="translate(600 0)"><path d="M180 163H600L660 185 720 195 780 245M275 488l25 0 65 22h40l25-8 45 45 30-12 35 60 25 3"/>
    <path stroke-dasharray="7 6" stroke-width="2" d="M165 310H318V410M318 310V265M365 248V330H500M318 410H520V460M465 165V290M465 230H575M230 310V375L310 450M390 330V510M480 415V495H395M318 410L310 455 275 488M575 170L580 280 660 282M480 290L560 295 580 330 610 370V500M610 337H680M228 15L230 60 330 163M378 15V163M505 15V163M598 163V75L650 15M832 105V200M365 248H465M310 165L335 240 365 260M610 445L720 447H850M640 450V510M700 447V520M665 282V400"/></g>
  <g transform="translate(1080 0)"><path d="M470 820L445 850 450 890 525 905 530 970 500 975 490 1060M530 970L560 985 590 960 575 940 620 935 640 900M640 960L665 985 760 970M660 900L650 960M345 1000L400 1005 440 1035 490 1060 440 1090V1143M345 1075L370 1050 400 1030M175 740L210 735V715M195 785L250 790 290 770M260 840L300 850"/>
    <path stroke-dasharray="7 6" d="M690 1040L670 1080 690 1143M770 1000L790 1040 870 1040M840 1060L830 1120M880 1060l20 60M530 60L560 95 610 90 690 90M535 15l10 50"/></g>
  <g transform="translate(2280 0)"><path d="M305 440L315 465 310 490 280 515 240 530 207 548V578L262 617 385 700V712L398 710 420 705 510 640 500 635 480 600 482 525 470 500 455 470 460 415M478 525L490 500 505 480M82 675H140V640M262 617H240L252 765 165 770 158 778 125 750 90 752M398 710L397 755 385 770 310 778 280 800 262 830M706 505V663H880M706 663V697H690L575 643 558 650 512 640M558 650L572 690 565 735 540 795M690 697V760L675 770 665 835M385 850L390 800 420 795 480 805 540 798 550 820 530 860 510 890 465 910 462 935M555 890L600 880 665 840 700 870 740 920 770 945M610 935L650 930 700 925 740 940 790 950M545 855L555 890 570 965H485M900 740L880 750 870 790 840 850 850 910M670 840L740 850 790 855 825 820 830 845M855 935L900 945 950 938M840 1015L890 1045 910 1070M790 950L800 985 780 1015H840M610 935L600 1000 580 1060 530 1080M520 1088H575L585 1110 650 1115 660 1143M780 1015L770 1060 790 1120M160 780l20 50 50 10M170 910l25-40 30 20M880 780l60 25 30 30"/>
    <path d="M310 285L350 295 378 300M215 310L235 320 225 370 230 400M380 120L400 150 450 165 440 210 425 225 440 255M548 45L555 105 520 140 535 160M690 55L685 100 690 110 670 155M450 190L520 175M580 190L620 200 650 220M660 270L750 275M570 165L620 150 670 160 690 185 740 175 780 215M640 290L650 330 690 320M690 95L760 100 850 90 880 110 930 130 925 190 900 200M540 230l40 10 50 30 10 50M450 210l50-10 50 20 40-20"/>
    <path stroke-dasharray="8 6" d="M135 573H207"/></g>
  <g transform="translate(3180 0)"><path d="M-20 412L100 400 120 430 130 490 155 530M-30 490L15 495 60 510 100 550 145 545M-45 540L0 510 15 495 15 470 60 430M240 410L290 390 345 420 340 470 350 540 375 570 355 610M350 540L400 535 430 500 470 490 490 400M130 150L140 125 200 125 260 120 345 105 340 50 440 35 570 50 600 80 640 130M268 325V245L320 235 370 280 410 285 440 330 480 300 625 300 640 240 700 200 740 160 804 130M268 325L310 295 360 340 400 400 450 405 500 390M75 740L140 740 210 715 260 680 265 640 205 625M210 715L225 748M490 655L480 600 470 580 520 550 540 490 600 500M630 545L740 585 804 570M70 845L150 885M95 365L120 430M50 315l90 55M130 150l30 80M570 50l15-20"/>
    <path stroke-dasharray="7 6" d="M150 885L100 930 50 940M600 500L620 440 700 445 770 420 780 500M540 660h60l50-40M530 740l80 10 60-60M585 760l0 50"/></g>
</g>
<g fill="none" stroke="#74689a" stroke-width="3" stroke-dasharray="14 6"><path d="M18 1000H3984M190 915H290L387 1143M190 915V972H236V1027H18M85 1143L105 1125H327V1143" opacity=".85"/></g>`;

define('ft-map', `
  <style>
    :host { display: block; position: relative; overflow: hidden; background: #8ab4f8; font-family: Roboto, sans-serif; }
    .art { position: absolute; inset: 0; width: 100%; height: 100%; display: block; }
    text { text-anchor: middle; font-family: Roboto, sans-serif; paint-order: stroke; stroke-linejoin: round; }
    .country { font-size: 11px; font-weight: 600; fill: #1e2124; stroke: #fff; stroke-width: 2px; }
    .state { font-size: 9px; fill: #5d6469; stroke: rgba(255, 255, 255, .85); stroke-width: 2px; }
    .sea { font-size: 9px; fill: #2f62c8; }
    .ocean { font-size: 10px; fill: #2f62c8; letter-spacing: 2px; }
    button { border: 0; padding: 0; background: #fff; font: 400 15px/35px Roboto, sans-serif; color: #5f6368; }
    .type, .tools button { box-shadow: 0 1px 4px -1px rgba(0, 0, 0, .3); }
    .type { position: absolute; top: 9px; left: 8px; display: flex; background: #fff; border-radius: 2px; }
    .type button { width: 87px; height: 35px; }
    .type button:first-child { width: 60px; border-right: 1px solid #eee; color: #000; font-weight: 500; }
    .tools { position: absolute; top: 9px; right: 8px; bottom: -3px; display: flex; flex-direction: column; }
    .tools button { display: grid; place-items: center; width: 35px; height: 35px; border-radius: 2px; }
    .tools .walk { margin: auto 0 28px; }
  </style>
  <svg class="art" viewBox="18 15 3966 1128" preserveAspectRatio="xMidYMin slice" aria-hidden="true">${MAP_LAND}</svg>
  <svg class="art" viewBox="366 485 1322 376" preserveAspectRatio="xMidYMin slice">
    ${labels(SEAS, 'sea')}${labels(OCEANS, 'ocean')}${labels(STATES, 'state')}${labels(COUNTRIES, 'country')}${pins}
  </svg>
  <div class="type"><button type="button">Map</button><button type="button">Satellite</button></div>
  <div class="tools">
    <button type="button" aria-label="Toggle fullscreen view"><svg width="16" height="16" viewBox="0 0 16 16" fill="none" stroke="#666" stroke-width="2"><path d="M1 6V1h5M10 1h5v5M15 10v5h-5M6 15H1v-5"/></svg></button>
    <button class="walk" type="button" aria-label="Street View"><svg width="16" height="26" viewBox="0 0 16 26"><path d="M4 7h8l3 3v7h-2l-1 9H8.500v-7h-1v7H4l-1-9H1v-7z" fill="#f5ac1d" stroke="#d18c12" stroke-width=".7"/><circle cx="8" cy="4.500" r="4.200" fill="#f9b52b" stroke="#d18c12" stroke-width=".7"/></svg></button>
    <button type="button" aria-label="Zoom in"><svg width="16" height="16" viewBox="0 0 16 16"><path d="M6.300 0h3.400v6.300H16v3.400H9.700V16H6.300V9.700H0V6.300h6.300z" fill="#666"/></svg></button>
  </div>`);
</script>
</body>
</html>
